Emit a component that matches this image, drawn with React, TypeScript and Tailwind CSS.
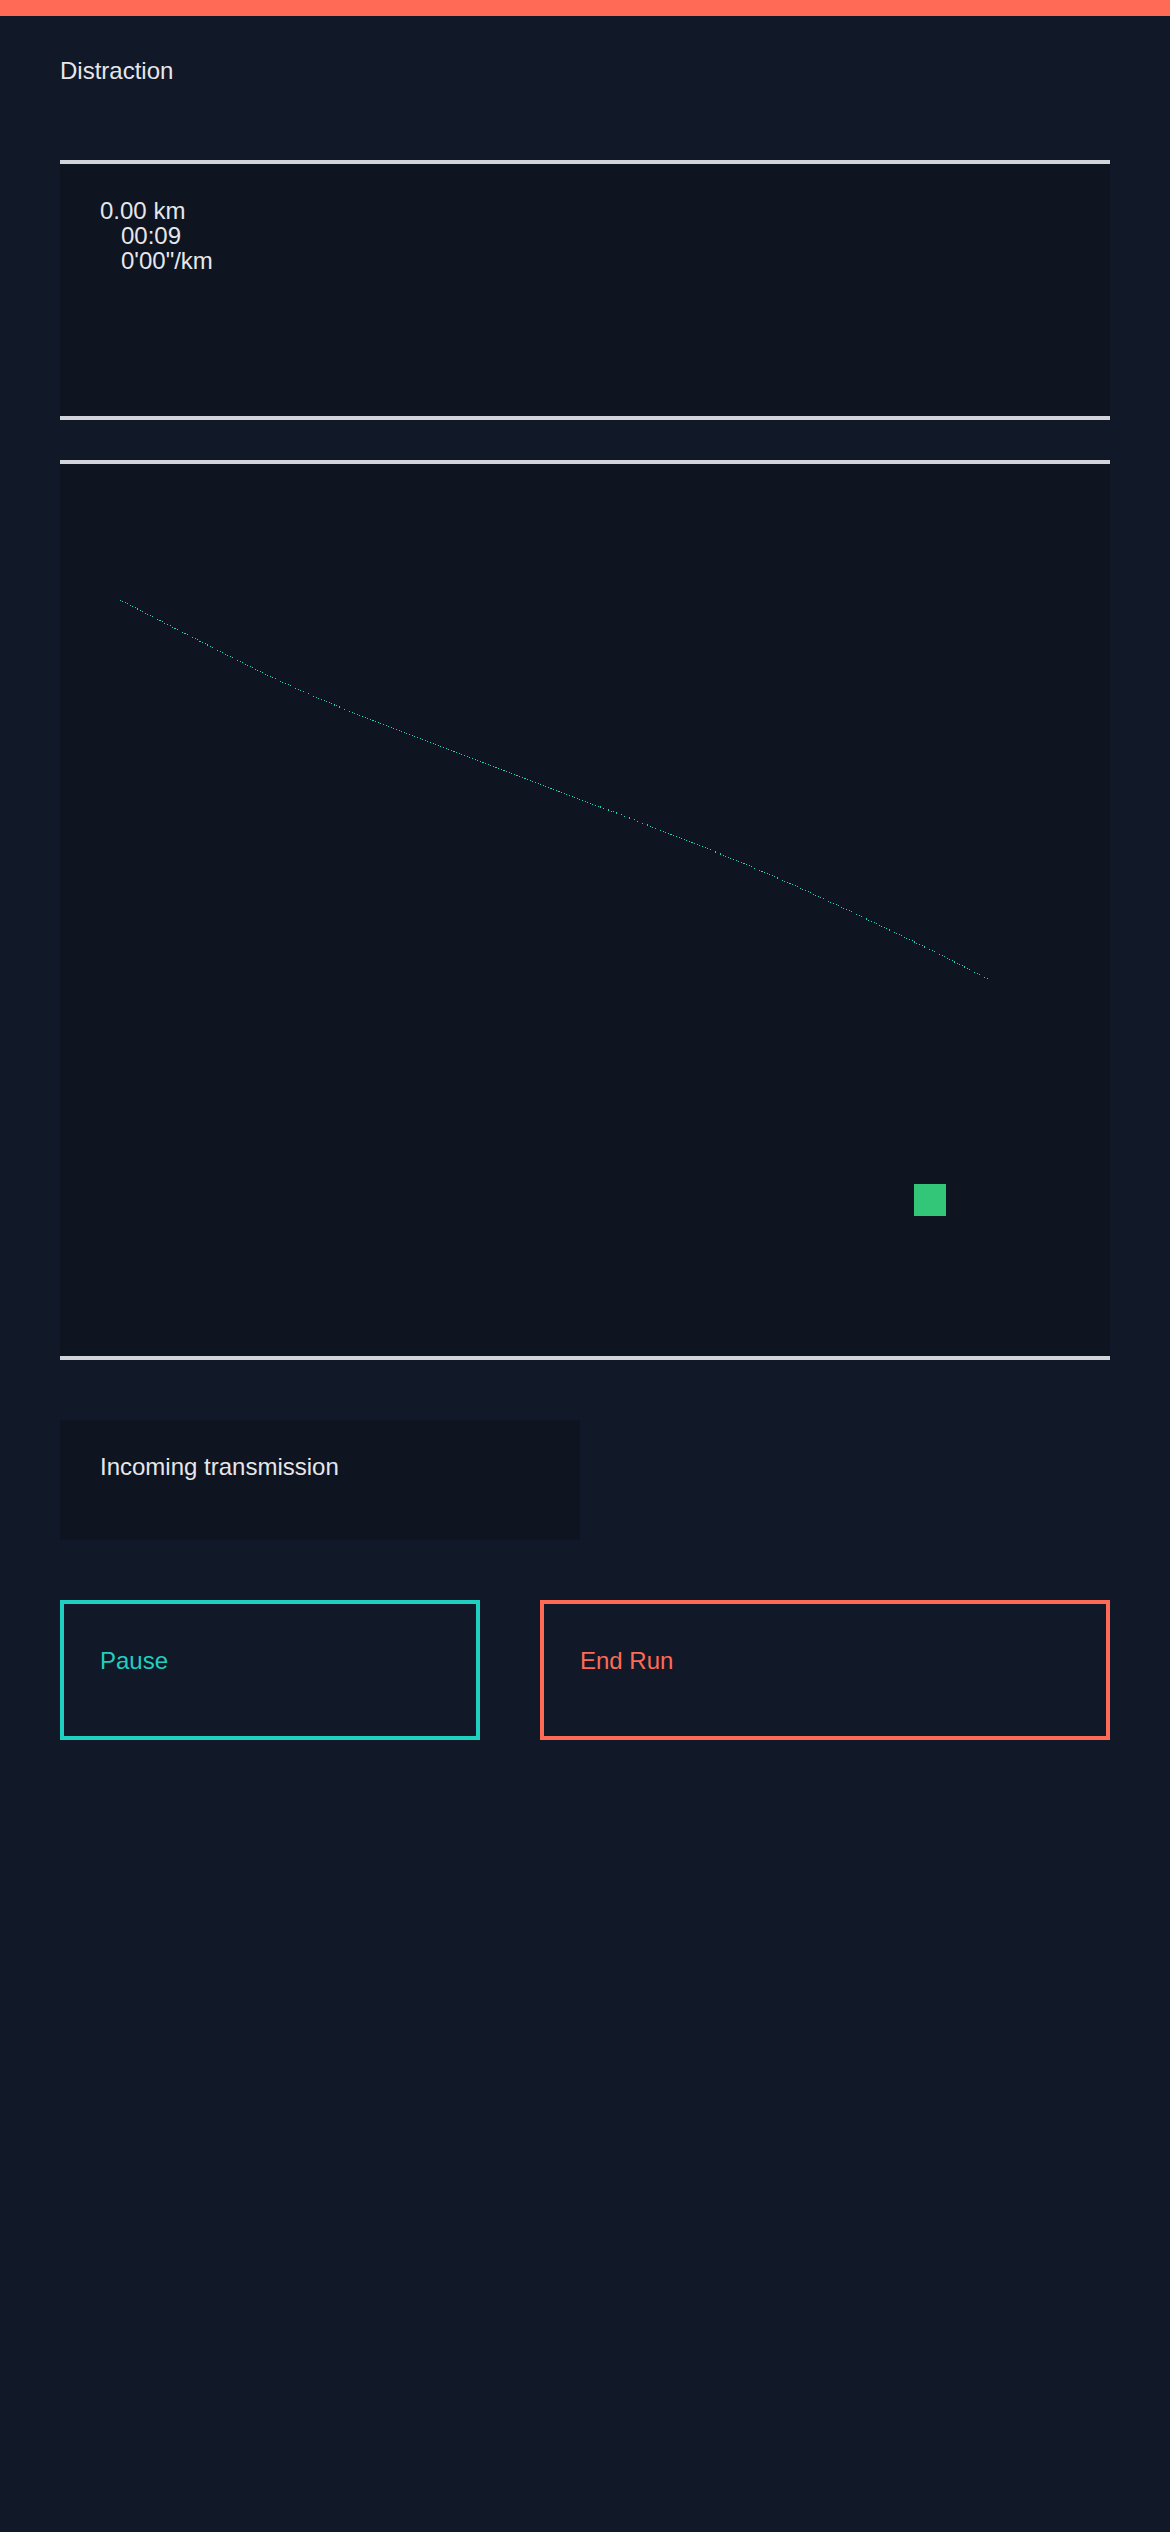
import React from 'react';

// route points in panel coordinates (outer box, incl. top border)
const ROUTE: [number, number][] = [
  [60, 140],
  [220, 221],
  [340, 271],
  [490, 328],
  [590, 366],
  [713, 416],
  [840, 475],
  [928, 519],
];

function smoothPath(pts: [number, number][]) {
  let d = `M${pts[0][0]},${pts[0][1]}`;
  for (let i = 0; i < pts.length - 1; i++) {
    const p0 = pts[i - 1] || pts[i];
    const p1 = pts[i];
    const p2 = pts[i + 1];
    const p3 = pts[i + 2] || p2;
    const c1x = p1[0] + (p2[0] - p0[0]) / 6;
    const c1y = p1[1] + (p2[1] - p0[1]) / 6;
    const c2x = p2[0] - (p3[0] - p1[0]) / 6;
    const c2y = p2[1] - (p3[1] - p1[1]) / 6;
    d += ` C${c1x},${c1y} ${c2x},${c2y} ${p2[0]},${p2[1]}`;
  }
  return d;
}

function StatsPanel() {
  return (
    <section className="h-[260px] bg-[#0e1420] border-y-4 border-[#d1d5db] pt-[34px] pl-10 text-[24px] leading-[25px] text-gray-200">
      <div>0.00 km</div>
      <div className="pl-[21px]">00:09</div>
      <div className="pl-[21px]">0'00"/km</div>
    </section>
  );
}

function MapPanel() {
  return (
    <section className="relative h-[900px] bg-[#0e1420] border-y-4 border-[#d1d5db]">
      <svg className="absolute inset-0 w-full h-full" viewBox="0 4 1050 892" preserveAspectRatio="none">
        <path
          d={smoothPath(ROUTE)}
          fill="none"
          stroke="#22d3c1"
          strokeWidth="1"
          strokeDasharray="1 1.8"
          shapeRendering="crispEdges"
        />
      </svg>
      <div className="absolute left-[854px] top-[720px] w-8 h-8 bg-[#33c678]" />
    </section>
  );
}

export default function App() {
  return (
    <div className="min-h-[2532px] bg-[#111827] font-['Liberation_Sans',Arial,sans-serif]">
      <div className="h-4 bg-[#ff6a56]" />
      <main className="px-[60px] pt-[42px] flex flex-col">
        <h1 className="text-[24px] leading-[25px] text-gray-200 mb-[77px]">Distraction</h1>

        <StatsPanel />

        <div className="mt-10">
          <MapPanel />
        </div>

        <div className="mt-[60px] w-[520px] h-[120px] bg-[#0e1420] pt-[34px] pl-10 text-[24px] leading-[25px] text-gray-200">
          Incoming transmission
        </div>

        <div className="mt-[60px] flex gap-[60px]">
          <button className="w-[420px] h-[140px] border-4 border-[#1fd0c0] pl-9 pt-[44px] flex items-start text-left text-[24px] leading-[25px] text-[#1fd0c0] cursor-pointer">
            Pause
          </button>
          <button className="flex-1 h-[140px] border-4 border-[#ff6a56] pl-9 pt-[44px] flex items-start text-left text-[24px] leading-[25px] text-[#ff6a56] cursor-pointer">
            End Run
          </button>
        </div>
      </main>
    </div>
  );
}
